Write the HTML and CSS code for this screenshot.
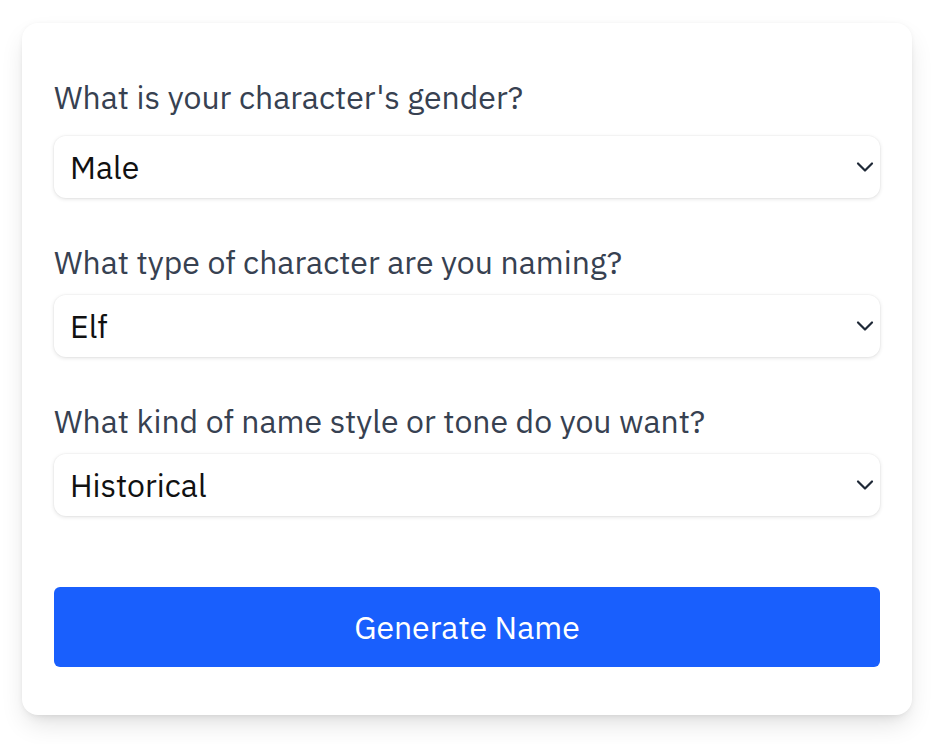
FILE: index.html
```html
<!DOCTYPE html>
<html lang="en">
<head>
<meta charset="utf-8">
<title>Character Name Generator</title>
<link rel="stylesheet" href="styles.css">
</head>
<body>
<main class="card">
  <form class="form">
    <div class="field">
      <label class="label" for="gender">What is your character's gender?</label>
      <div class="select-wrap">
        <select id="gender" class="select">
          <option>Male</option>
          <option>Female</option>
          <option>Non-binary</option>
        </select>
        <svg class="chevron" viewBox="0 0 18 11" width="18" height="11" aria-hidden="true"><path d="M2 2 L9 9 L16 2" fill="none" stroke="#1f2937" stroke-width="2.2" stroke-linecap="round" stroke-linejoin="round"/></svg>
      </div>
    </div>
    <div class="field">
      <label class="label" for="type">What type of character are you naming?</label>
      <div class="select-wrap">
        <select id="type" class="select">
          <option>Elf</option>
          <option>Dwarf</option>
          <option>Human</option>
        </select>
        <svg class="chevron" viewBox="0 0 18 11" width="18" height="11" aria-hidden="true"><path d="M2 2 L9 9 L16 2" fill="none" stroke="#1f2937" stroke-width="2.2" stroke-linecap="round" stroke-linejoin="round"/></svg>
      </div>
    </div>
    <div class="field">
      <label class="label" for="style">What kind of name style or tone do you want?</label>
      <div class="select-wrap">
        <select id="style" class="select">
          <option>Historical</option>
          <option>Modern</option>
          <option>Fantasy</option>
        </select>
        <svg class="chevron" viewBox="0 0 18 11" width="18" height="11" aria-hidden="true"><path d="M2 2 L9 9 L16 2" fill="none" stroke="#1f2937" stroke-width="2.2" stroke-linecap="round" stroke-linejoin="round"/></svg>
      </div>
    </div>
    <button type="button" class="button">Generate Name</button>
  </form>
</main>
</body>
</html>
```
FILE: styles.css
```css
* { box-sizing: border-box; }
html, body { margin: 0; padding: 0; background: #ffffff; }
body {
  font-family: "IBM Plex Sans", "Noto Sans", "Open Sans", sans-serif;
  padding: 23px 22px 40px;
}
.card {
  background: #ffffff;
  border-radius: 16px;
  padding: 50px 32px 48px;
  box-shadow: 0 0 5px rgba(0,0,0,0.04), 0 12px 26px -4px rgba(0,0,0,0.12), 0 6px 12px -6px rgba(0,0,0,0.10);
}
.form { display: flex; flex-direction: column; }
.field { display: flex; flex-direction: column; gap: 9px; margin-bottom: 40px; }
.field:first-child { gap: 15px; }
.label {
  font-size: 32px;
  line-height: 48px;
  color: #374151;
}
.select-wrap { position: relative; }
.select {
  appearance: none;
  -webkit-appearance: none;
  display: block;
  width: 100%;
  height: 62px;
  border: none;
  border-radius: 12px;
  background: #ffffff;
  padding: 0 48px 0 16px;
  font-family: inherit;
  font-size: 32px;
  color: #111111;
  box-shadow: 0 0 0 1px rgba(0,0,0,0.02), 0 1px 4px rgba(0,0,0,0.12);
  outline: none;
}
.chevron {
  position: absolute;
  right: 6px;
  top: 50%;
  transform: translateY(-50%);
  pointer-events: none;
}
.button {
  margin-top: 31px;
  height: 80px;
  border: none;
  border-radius: 6px;
  background: #195ffd;
  color: #ffffff;
  font-family: inherit;
  font-size: 32px;
}
```
